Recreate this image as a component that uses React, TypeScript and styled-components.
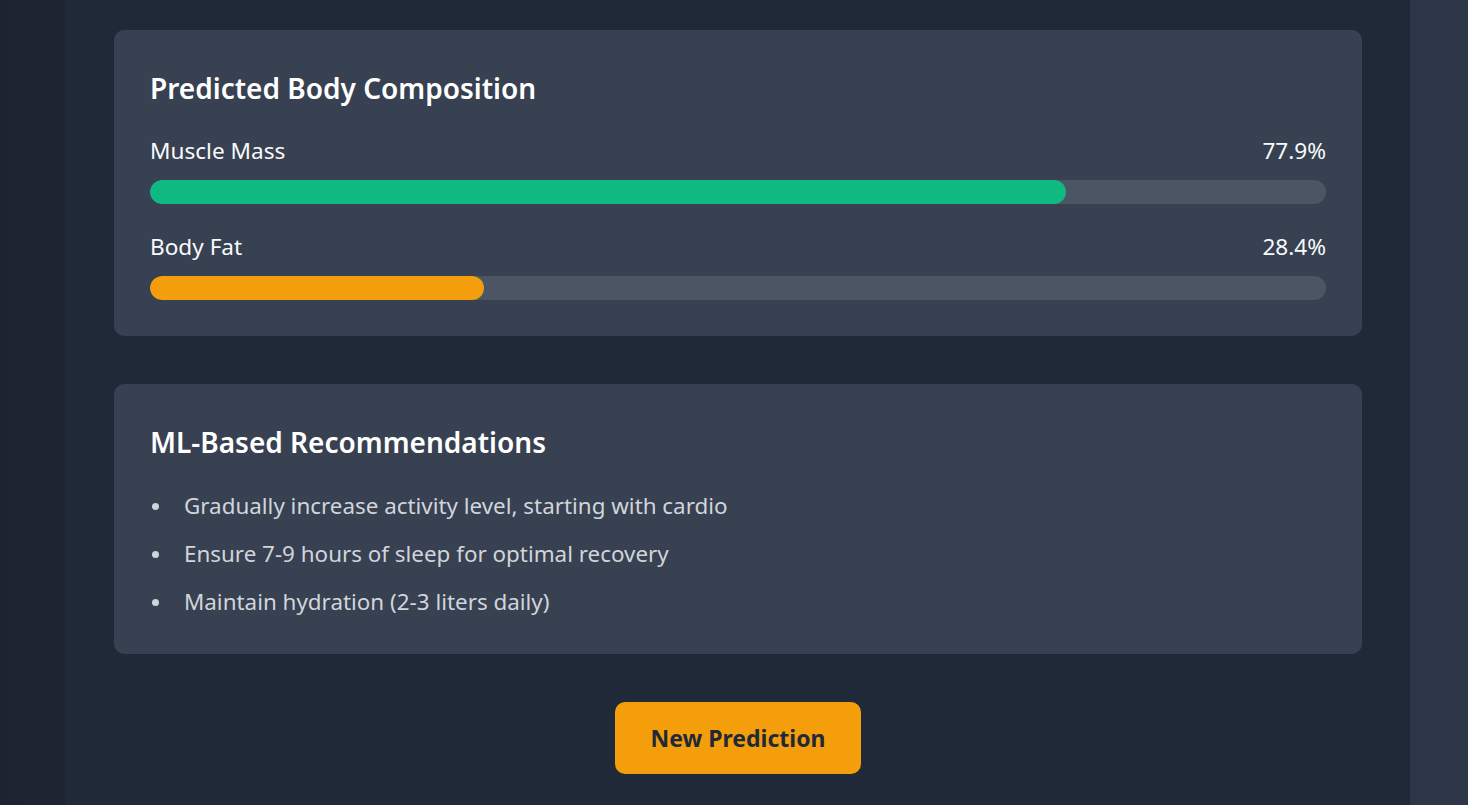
import React from "react";
import styled, { createGlobalStyle } from "styled-components";

const Global = createGlobalStyle`
  html, body { margin: 0; padding: 0; }
  body {
    font-family: "Noto Sans", "Open Sans", sans-serif;
    background: linear-gradient(90deg, #1d2330 0%, #232b3a 40%, #2e3748 100%);
    min-height: 805px;
  }
  * { box-sizing: border-box; }
`;

const Page = styled.div`
  display: flex;
  padding: 0 58px 0 65px;
  min-height: 805px;
`;

const Container = styled.main`
  flex: 1;
  background: #1f2937;
  padding: 30px 48px 31px 49px;
  display: flex;
  flex-direction: column;
  gap: 48px;
`;

const Card = styled.section<{ $bottom: number }>`
  background: #374151;
  border-radius: 10px;
  padding: 41px 36px ${(p) => p.$bottom}px;
`;

const Title = styled.h2<{ $gap: number }>`
  margin: 0 0 ${(p) => p.$gap}px;
  font-size: 28px;
  line-height: 34px;
  font-weight: 600;
  color: #ffffff;
`;

const Metric = styled.div`
  & + & { margin-top: 28px; }
`;

const MetricHead = styled.div`
  display: flex;
  justify-content: space-between;
  font-size: 22.6px;
  line-height: 30px;
  color: #f9fafb;
  margin-bottom: 14px;
`;

const Track = styled.div`
  height: 24px;
  border-radius: 12px;
  background: #4b5563;
  overflow: hidden;
`;

const Fill = styled.div<{ $color: string }>`
  height: 100%;
  border-radius: 12px;
  background: ${(p) => p.$color};
`;

const List = styled.ul`
  margin: 0;
  padding: 0;
  list-style: none;
  color: #d1d5db;
  font-size: 22.4px;
  line-height: 30px;
`;

const Item = styled.li`
  display: flex;
  align-items: center;
  & + & { margin-top: 18px; }
`;

const Dot = styled.span`
  flex: none;
  width: 7px;
  height: 7px;
  border-radius: 50%;
  background: #d1d5db;
  margin: 0 25px 0 2px;
`;

const ButtonRow = styled.div`
  display: flex;
  justify-content: center;
`;

const Button = styled.button`
  font-family: "Noto Sans", "Open Sans", sans-serif;
  background: #f59e0b;
  color: #1f2937;
  border: none;
  border-radius: 10px;
  padding: 20px 36px;
  font-size: 23px;
  line-height: 32px;
  font-weight: 700;
  cursor: pointer;
`;

const metrics = [
  { label: "Muscle Mass", value: 77.9, color: "#10b981" },
  { label: "Body Fat", value: 28.4, color: "#f59e0b" },
];

const recs = [
  "Gradually increase activity level, starting with cardio",
  "Ensure 7-9 hours of sleep for optimal recovery",
  "Maintain hydration (2-3 liters daily)",
];

export default function App() {
  return (
    <>
      <Global />
      <Page>
        <Container>
          <Card $bottom={36}>
            <Title $gap={31}>Predicted Body Composition</Title>
            {metrics.map((m) => (
              <Metric key={m.label}>
                <MetricHead>
                  <span>{m.label}</span>
                  <span>{m.value}%</span>
                </MetricHead>
                <Track>
                  <Fill $color={m.color} style={{ width: `${m.value}%` }} />
                </Track>
              </Metric>
            ))}
          </Card>
          <Card $bottom={37}>
            <Title $gap={32}>ML-Based Recommendations</Title>
            <List>
              {recs.map((r) => (
                <Item key={r}>
                  <Dot />
                  {r}
                </Item>
              ))}
            </List>
          </Card>
          <ButtonRow>
            <Button>New Prediction</Button>
          </ButtonRow>
        </Container>
      </Page>
    </>
  );
}
